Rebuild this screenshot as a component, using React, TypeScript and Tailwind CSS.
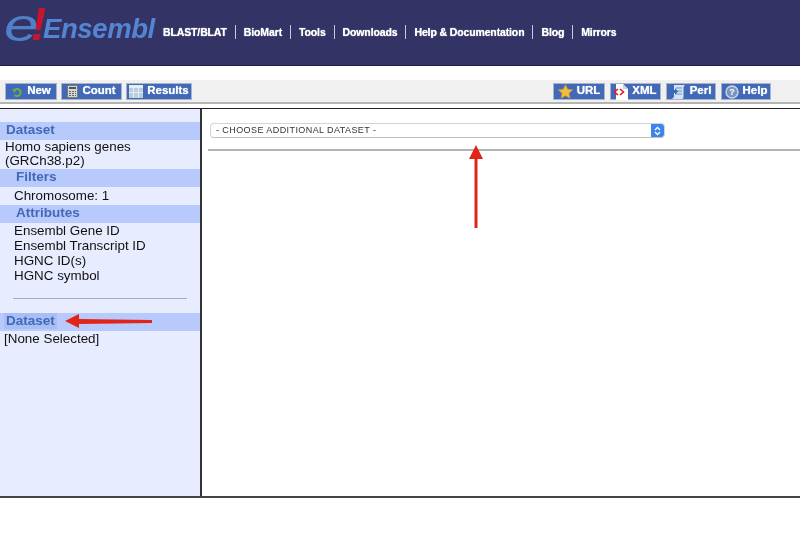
import React from "react";

const nav = ["BLAST/BLAT", "BioMart", "Tools", "Downloads", "Help & Documentation", "Blog", "Mirrors"];

const shadow = "[text-shadow:0_0_1px_#dfe6f8]";

function Btn({ icon, label, w }: { icon: React.ReactNode; label: string; w: string }) {
  return (
    <div className={`${w} h-[17px] bg-[#4169b8] border border-[#a9b4cc] flex items-center justify-center gap-[4px] text-white font-bold text-[11.5px] leading-none ${shadow}`}>
      {icon}
      <span className="-mt-[2px]">{label}</span>
    </div>
  );
}

const NewIcon = (
  <svg width="12" height="12" viewBox="0 0 12 12" fill="none">
    <path d="M3 4.5 A3.6 3.6 0 1 1 3.4 9" stroke="#67b04a" strokeWidth="2" />
    <path d="M1 3.5 L5 3 L4 7 Z" fill="#67b04a" />
  </svg>
);
const CountIcon = (
  <svg width="11" height="13" viewBox="0 0 11 13">
    <rect x="0.5" y="0.5" width="10" height="12" fill="#d5d5d5" stroke="#777" />
    <rect x="2" y="2" width="7" height="2" fill="#555" />
    <path d="M2 6h2v1H2zM5 6h2v1H5zM8 6h1v1H8zM2 8h2v1H2zM5 8h2v1H5zM8 8h1v1H8zM2 10h2v1H2zM5 10h2v1H5zM8 10h1v1H8z" fill="#666" />
  </svg>
);
const ResultsIcon = (
  <svg width="14" height="13" viewBox="0 0 14 13">
    <rect x="0" y="0" width="14" height="13" fill="#b9cfe0" />
    <rect x="0" y="0" width="14" height="3" fill="#e4eef4" />
    <path d="M4.5 3v10M9.5 3v10M0 7.5h14" stroke="#e6eef4" strokeWidth="1" />
  </svg>
);
const StarIcon = (
  <svg width="15" height="15" viewBox="0 0 24 24">
    <path d="M12 1 L15.5 8.4 L23.5 9.3 L17.6 14.8 L19.2 22.8 L12 18.8 L4.8 22.8 L6.4 14.8 L0.5 9.3 L8.5 8.4 Z" fill="#f2bd3d" stroke="#c8942a" strokeWidth="1" />
  </svg>
);
const XmlIcon = (
  <svg width="14" height="16" viewBox="0 0 14 16">
    <path d="M2 0H9L14 5V16H2Z" fill="#fff" />
    <path d="M9 0V5H14Z" fill="#ccd" />
    <path d="M4 5 L0.5 8 L4 11M6 5 L9.5 8 L6 11" stroke="#e01c1c" strokeWidth="1.6" fill="none" />
  </svg>
);
const PerlIcon = (
  <svg width="15" height="15" viewBox="0 0 15 15">
    <path d="M3 1H14L12.5 3V13.5C12.5 14.5 11 15 10 15H1L3 13Z" fill="#d4e4f2" />
    <path d="M5 4h6M5 7h6M5 10h6" stroke="#6a94c4" strokeWidth="1" />
    <path d="M0 6h4V4l3 3.5L4 11V9H0Z" fill="#2f6fb8" />
  </svg>
);
const HelpIcon = (
  <svg width="14" height="14" viewBox="0 0 14 14">
    <circle cx="7" cy="7" r="6" fill="#7b93bf" stroke="#ccd6e6" strokeWidth="1.4" />
    <text x="7" y="10.2" textAnchor="middle" fontSize="9" fontWeight="700" fill="#e6ecf6" fontFamily="Liberation Sans">?</text>
  </svg>
);

function Band({ children, indent }: { children: React.ReactNode; indent?: boolean }) {
  return (
    <div className={`h-[18px] bg-[#b8c9fb] text-[#4169b8] font-bold text-[13.5px] leading-[16px] ${indent ? "pl-[16px]" : "pl-[6px]"}`}>
      {children}
    </div>
  );
}

export default function App() {
  return (
    <div className="w-[800px] h-[544px] relative overflow-hidden bg-white blur-[0.4px] font-['Liberation_Sans',Arial,sans-serif]">
      <header className="h-[66px] bg-[#333366] border-b border-[#1b1b4a] flex items-start">
        <div className="w-[163px] h-[50px] flex items-center pl-[4px] shrink-0">
          <span className="italic text-[#4f80c8] text-[46px] h-[50px] leading-[50px] w-[27px] origin-left scale-x-[1.35] mt-[0px]">e</span>
          <span className="italic font-bold text-[#c8142c] text-[46px] h-[50px] leading-[50px] w-[11px] -mt-[2px]">!</span>
          <span className="italic font-bold text-[#5485d2] text-[27.5px] leading-none mt-[7px] tracking-[-0.4px] ml-[1px]">Ensembl</span>
        </div>
        <nav className="flex items-center h-[14px] mt-[25px] text-white font-bold text-[10.5px] tracking-[-0.13px] leading-none [text-shadow:0_0_1px_#fff]">
          {nav.map((n, i) => (
            <React.Fragment key={n}>
              {i > 0 && <span className="w-px h-[14px] bg-[#c4c8e0] mx-[8px]" />}
              <span>{n}</span>
            </React.Fragment>
          ))}
        </nav>
      </header>

      <div className="h-[14px]" />

      <div className="h-[24px] bg-[#f0f0f0] border-b-2 border-[#b4b4b4] flex justify-between pt-[3px] pl-[5px] pr-[29px]">
        <div className="flex gap-[4px]">
          <Btn icon={NewIcon} label="New" w="w-[52px]" />
          <Btn icon={CountIcon} label="Count" w="w-[61px]" />
          <Btn icon={ResultsIcon} label="Results" w="w-[66px]" />
        </div>
        <div className="flex gap-[5px]">
          <Btn icon={StarIcon} label="URL" w="w-[52px]" />
          <Btn icon={XmlIcon} label="XML" w="w-[51px]" />
          <Btn icon={PerlIcon} label="Perl" w="w-[50px]" />
          <Btn icon={HelpIcon} label="Help" w="w-[50px]" />
        </div>
      </div>

      <div className="h-[4px]" />

      <div className="h-[390px] flex border-t border-[#222] border-b-2 border-b-[#444]">
        <aside className="w-[200px] shrink-0 bg-[#e8ecff] text-[#111] text-[13.4px] leading-[15px] pt-[13px]">
          <Band>Dataset</Band>
          <div className="pl-[5px] leading-[13.5px] h-[29px]">
            Homo sapiens genes
            <br />
            (GRCh38.p2)
          </div>
          <Band indent>Filters</Band>
          <div className="pl-[14px] h-[18px] leading-[17px]">Chromosome: 1</div>
          <Band indent>Attributes</Band>
          <div>
            <div className="pl-[14px]">Ensembl Gene ID</div>
            <div className="pl-[14px]">Ensembl Transcript ID</div>
            <div className="pl-[14px]">HGNC ID(s)</div>
            <div className="pl-[14px]">HGNC symbol</div>
          </div>
          <div className="h-px bg-[#aab0b8] mx-[13px] mt-[15px] mb-[14px]" />
          <div className="h-[18px] bg-[#b8c9fb] text-[#4169b8] font-bold text-[13.5px] leading-[16px] pl-[4px]">
            <span className="bg-[#a9bef5] px-[2px] inline-block">Dataset</span>
          </div>
          <div className="pl-[4px] h-[15px]">[None Selected]</div>
        </aside>

        <main className="flex-1 border-l-2 border-[#333] pt-[14px] pl-[6px]">
          <div className="w-[455px] h-[15px] ml-[2px] rounded-[4px] border border-[#d4d4d4] border-b-[#c0c0c0] bg-white flex items-center justify-between text-[9px] text-[#333] tracking-[0.42px] overflow-hidden">
            <span className="pl-[5px]">- CHOOSE ADDITIONAL DATASET -</span>
            <span className="w-[13px] h-full bg-[#3a86ec] flex items-center justify-center shrink-0">
              <svg width="7" height="12" viewBox="0 0 7 12" fill="none" stroke="#fff" strokeWidth="1.3">
                <path d="M1 5 L3.5 2.5 L6 5M1 7 L3.5 9.5 L6 7" />
              </svg>
            </span>
          </div>
          <div className="h-[2px] bg-[#b4b4b4] mt-[11px]" />
        </main>
      </div>

      <svg className="absolute left-[60px] top-[312px]" width="95" height="20" viewBox="0 0 95 20">
        <path d="M5 9 L19 2 L19 7 L92 8 L92 11 L19 12 L19 16 Z" fill="#e0241a" />
      </svg>
      <svg className="absolute left-[465px] top-[142px]" width="22" height="90" viewBox="0 0 22 90">
        <path d="M11 3 L18 17 L12.5 17 L12.5 86 L9.5 86 L9.5 17 L4 17 Z" fill="#e0241a" />
      </svg>
    </div>
  );
}
